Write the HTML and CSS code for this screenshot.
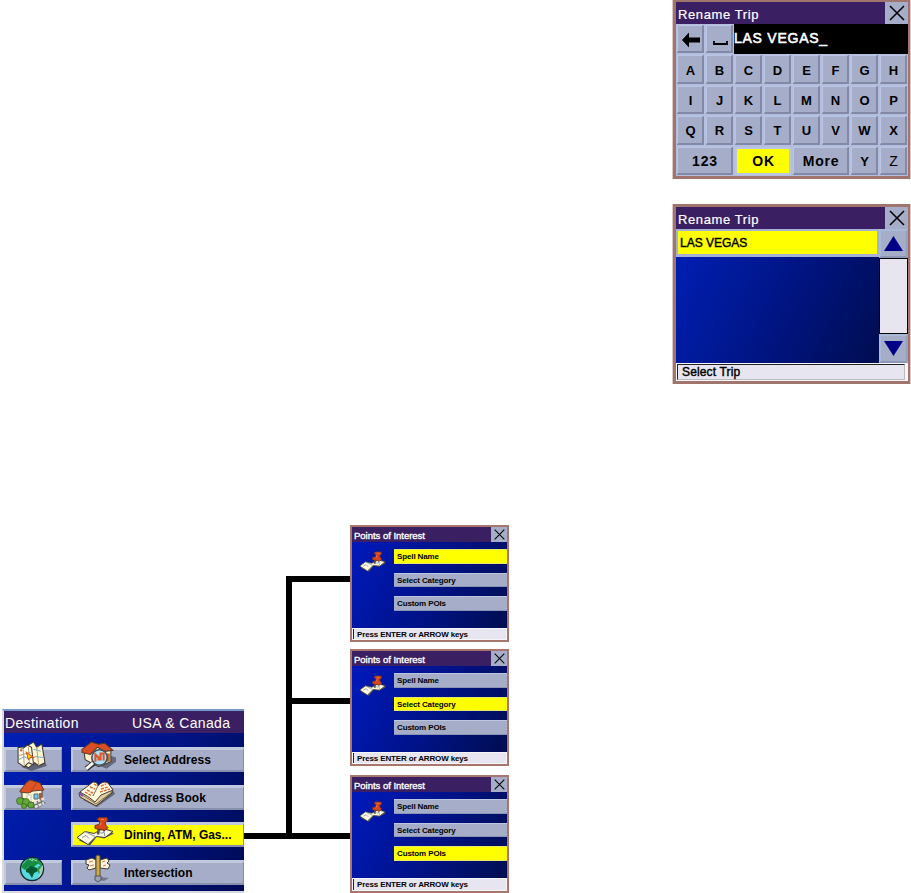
FILE: index.html
```html
<!DOCTYPE html>
<html lang="en">
<head>
    <meta charset="UTF-8">
    <title>Rename Trip / Points of Interest</title>
    <link rel="stylesheet" href="styles.css">
</head>
<body>
    <!-- shared icons -->
    <svg class="defs">
        <symbol id="close" viewBox="0 0 16 16">
            <path d="M1 1L15 15M15 1L1 15" fill="none" stroke="#000" stroke-width="1.5"/>
        </symbol>
        <symbol id="pin" viewBox="0 0 38 29">
            <path d="M2 23L13 15L18 18L27 13L37 16L27 21L20 19L13 28Z" fill="#555" transform="translate(1 1)"/>
            <path d="M1 21L9 15L18 17L27 12L37 15L29 21L20 20L12 28Z" fill="#fff9df" stroke="#413f35"/>
            <path d="M9 15L19 20M27 12L29 20M6 21L10 19L13 22M23 15L25 17L29 15" fill="none" stroke="#7996a8"/>
            <path d="M23 11L22 18" stroke="#555" stroke-width="2.5"/>
            <path d="M23 1L31 1L32 4L29 6L30 9L32 11L29 14L19 12L19 9L23 8L24 5L21 3Z" fill="#d94719" stroke="#6b301f"/>
            <path d="M25 3L28 3M25 6L24 9" stroke="#ff8051"/>
        </symbol>
    </svg>

    <div class="canvas">
        <div class="screen keyboard">
            <div class="titlebar"><span>Rename Trip</span><i class="close"><svg><use href="#close"/></svg></i></div>
            <div class="keys">
                <b class="key"><svg class="glyph" viewBox="0 0 20 16"><path d="M1 8L8 0.5V5.5H19V10.5H8V15.5Z"/></svg></b>
                <b class="key"><svg class="glyph" viewBox="0 0 20 16"><path d="M4 9V12H17V9" fill="none" stroke="#000" stroke-width="1.8"/></svg></b>
                <div class="entry">LAS VEGAS_</div>
                <b class="key">A</b><b class="key">B</b><b class="key">C</b><b class="key">D</b><b class="key">E</b><b class="key">F</b><b class="key">G</b><b class="key">H</b>
                <b class="key">I</b><b class="key">J</b><b class="key">K</b><b class="key">L</b><b class="key">M</b><b class="key">N</b><b class="key">O</b><b class="key">P</b>
                <b class="key">Q</b><b class="key">R</b><b class="key">S</b><b class="key">T</b><b class="key">U</b><b class="key">V</b><b class="key">W</b><b class="key">X</b>
                <b class="key wide">123</b><b class="key wide active">OK</b><b class="key wide">More</b><b class="key">Y</b><b class="key thin">Z</b>
            </div>
        </div>

        <div class="screen triplist">
            <div class="titlebar"><span>Rename Trip</span><i class="close"><svg><use href="#close"/></svg></i></div>
            <div class="list">
                <div class="rows"><div class="row">LAS VEGAS</div></div>
                <div class="scroll">
                    <div class="arrow"><svg viewBox="0 0 19 15"><path d="M9.5 0L19 15H0Z"/></svg></div>
                    <div class="track"></div>
                    <div class="arrow"><svg viewBox="0 0 19 15"><path d="M9.5 15L19 0H0Z"/></svg></div>
                </div>
            </div>
            <div class="status"><span>Select Trip</span></div>
        </div>

        <div class="line trunk"></div>
        <div class="line branch1"></div>
        <div class="line branch2"></div>
        <div class="line branch3"></div>

        <div class="screen poi poi1">
            <div class="titlebar"><span>Points of Interest</span><i class="close"><svg><use href="#close"/></svg></i></div>
            <div class="poi-body">
                <svg class="poi-icon"><use href="#pin"/></svg>
                <div class="options"><div class="active">Spell Name</div><div>Select Category</div><div>Custom POIs</div></div>
            </div>
            <div class="status"><span>Press ENTER or ARROW keys</span></div>
        </div>

        <div class="screen poi poi2">
            <div class="titlebar"><span>Points of Interest</span><i class="close"><svg><use href="#close"/></svg></i></div>
            <div class="poi-body">
                <svg class="poi-icon"><use href="#pin"/></svg>
                <div class="options"><div>Spell Name</div><div class="active">Select Category</div><div>Custom POIs</div></div>
            </div>
            <div class="status"><span>Press ENTER or ARROW keys</span></div>
        </div>

        <div class="screen poi poi3">
            <div class="titlebar"><span>Points of Interest</span><i class="close"><svg><use href="#close"/></svg></i></div>
            <div class="poi-body">
                <svg class="poi-icon"><use href="#pin"/></svg>
                <div class="options"><div>Spell Name</div><div>Select Category</div><div class="active">Custom POIs</div></div>
            </div>
            <div class="status"><span>Press ENTER or ARROW keys</span></div>
        </div>

        <div class="destination">
            <div class="dest-title"><span>Destination</span><span class="region">USA &amp; Canada</span></div>
            <div class="menu">
                <div class="cell">
                    <svg class="icon" viewBox="1 2 30 29">
                        <path d="M6 27L28 21L31 26L16 31Z" fill="#60647a"/>
                        <path d="M13 6L18 3L21 8L26 5L29 23L23 26L19 23L13 28L9 25Z" fill="#fff5d0" stroke="#3e3930"/>
                        <path d="M3 8L8 9L12 6L16 8L18 25L13 23L9 27L3 23Z" fill="#fffbe7" stroke="#3e3930"/>
                        <path d="M8 10L9 26M13 8L14 23M21 8L23 26M4 16L15 13" stroke="#baa878" fill="none"/>
                        <path d="M4 20L9 17L12 19M18 10L25 12M19 17L27 18" stroke="#7facc5" fill="none"/>
                        <path d="M11 13L18 18L15 18L13 20Z" fill="#ffe300" stroke="#d64b20"/>
                        <path d="M5 11H7" stroke="#d64b20" stroke-width="2"/>
                    </svg>
                </div>
                <div class="cell right">
                    <svg class="icon house" viewBox="1 0 34 30">
                        <path d="M8 20L26 27L35 20V16L17 10Z" fill="#666a7c"/>
                        <path d="M4 10L14 5L30 8V20L18 25L5 18Z" fill="#fff2c8" stroke="#403830"/>
                        <path d="M25 12H29V20H25Z" fill="#c16a36"/>
                        <path d="M2 8L11 1L18 3L24 2L32 9L24 10L17 6L10 13L2 11Z" fill="#dc4d24" stroke="#59382a"/>
                        <path d="M14 21L6 27" stroke="#292b2e" stroke-width="5"/>
                        <path d="M13 21L6 27" stroke="#f4f4e9" stroke-width="3"/>
                        <circle cx="19" cy="16" r="7.5" fill="#addef6" stroke="#40505d" stroke-width="1.5"/>
                        <path d="M15 20V13L18 16V19M20 19V12L23 12V19" fill="none" stroke="#df552a" stroke-width="2"/>
                    </svg>
                    <span>Select Address</span>
                </div>
                <div class="cell">
                    <svg class="icon" viewBox="1 1 31 30">
                        <path d="M5 22L20 18L31 25L22 31L8 28Z" fill="#777a77"/>
                        <path d="M7 11L14 6L27 9V22L18 25L7 20Z" fill="#fff4ce" stroke="#413c31"/>
                        <path d="M5 13L11 5L15 2L25 5L29 12L18 13L13 15L5 14Z" fill="#de5424" stroke="#62412a"/>
                        <path d="M15 15L22 4" stroke="#af4020"/>
                        <path d="M12 17H16V24L12 22Z" fill="#fff" stroke="#b9a984" stroke-width=".7"/>
                        <path d="M19 16H23V21H19Z" fill="#7ac8e6" stroke="#386d86"/>
                        <path d="M24 15H27V22L24 23Z" fill="#b75730"/>
                        <path d="M19 25L30 20M20 29L29 25" stroke="#e3e3df" stroke-width="2.5" stroke-dasharray="3 1"/>
                        <g fill="#64a837" stroke="#32621d" stroke-width=".7"><circle cx="5" cy="23" r="3.5"/><circle cx="11" cy="24" r="3.5"/><circle cx="16" cy="27" r="3"/><circle cx="9" cy="28" r="2.5"/></g>
                    </svg>
                </div>
                <div class="cell right">
                    <svg class="icon book" viewBox="0 0 37 29">
                        <path d="M5 21L19 28L37 15L35 11L28 12Z" fill="#62677a"/>
                        <path d="M1 14L5 12L16 19L21 17L34 9V14L18 27L2 18Z" fill="#e7cf9d" stroke="#453729"/>
                        <path d="M2 13L15 3Q20 3 20 7Q25 1 30 4L35 11L23 16L17 23Q10 17 2 13Z" fill="#fff9df" stroke="#493f32"/>
                        <path d="M20 7L15 17M3 15L18 25L34 13" fill="none" stroke="#786f58"/>
                        <path d="M1 14L5 17" stroke="#7550ae" stroke-width="2"/>
                        <path d="M12 8L17 10M9 11L15 14M7 13L14 17M16 5L19 7M23 7L28 5M23 10L30 8M22 13L32 10" stroke="#e06832" stroke-width="1.4" stroke-dasharray="3 1"/>
                    </svg>
                    <span>Address Book</span>
                </div>
                <div></div>
                <div class="cell right active">
                    <svg class="icon pin"><use href="#pin"/></svg>
                    <span class="dining">Dining, ATM, Gas...</span>
                </div>
                <div class="cell">
                    <svg class="icon globe" viewBox="0 0 26 26">
                        <circle cx="13" cy="13" r="11.5" fill="#58d8df" stroke="#102b2c" stroke-width="1.4"/>
                        <path d="M4 8L9 3L18 2L21 7L17 9L15 11L9 11L6 14L2 11Z" fill="#168b42"/>
                        <path d="M7 13L12 10L18 12L19 15L15 17L13 22L10 17L7 16Z" fill="#07592e"/>
                        <path d="M16 3L22 6L24 11L20 10L18 13L20 18L23 17L24 13" fill="#219747"/>
                        <path d="M24 9Q25 18 18 23Q22 17 20 14Z" fill="#c8d8cc" opacity=".8"/>
                        <path d="M10 3L14 5M13 3L18 5" stroke="#a2dfb5"/>
                    </svg>
                </div>
                <div class="cell right">
                    <svg class="icon post" viewBox="0 0 26 29">
                        <path d="M15 23L24 24L19 27L14 26Z" fill="#72778c"/>
                        <path d="M1 6L7 4L11 6V14L4 16L2 14L4 11L1 10Z" fill="#fff6db" stroke="#43392c"/>
                        <path d="M15 6L22 4L24 7L22 9L25 11L23 15L15 14Z" fill="#fff6db" stroke="#43392c"/>
                        <path d="M11 2L13 1L15 2V23H11Z" fill="#d2ad47" stroke="#594b2d"/>
                        <path d="M10 22H16V26L13 28L10 26Z" fill="#9fa3ad" stroke="#505362"/>
                        <path d="M4 8L8 7M5 12L9 11M17 8L20 7M18 12L21 11" stroke="#d67755"/>
                    </svg>
                    <span>Intersection</span>
                </div>
            </div>
        </div>
    </div>
</body>
</html>
```

FILE: styles.css
```css
body {
    margin: 0;
    background: #fff;
    color: #000;
    font-family: "Liberation Sans", Arial, sans-serif;
}
.defs {
    position: absolute;
    width: 0;
    height: 0;
}
.canvas {
    position: relative;
    width: 911px;
    height: 893px;
    overflow: hidden;
}
.screen {
    position: absolute;
    display: flex;
    flex-direction: column;
    box-sizing: border-box;
    border: solid #a0756d;
    white-space: nowrap;
}
.keyboard, .triplist {
    left: 673px;
    width: 237px;
    border-width: 2px 2px 3px 3px;
    box-shadow: -1px 0 #dcc9c5, 1px 0 #dcc9c5;
}
.keyboard {
    top: 0;
    height: 179px;
}
.triplist {
    top: 204px;
    height: 180px;
    border-top-width: 3px;
}
.titlebar {
    display: flex;
    justify-content: space-between;
    flex: none;
    height: 22px;
    line-height: 25px;
    background: #3a2062;
    color: #fff;
    font-size: 13px;
    letter-spacing: 0.6px;
    text-indent: 2px;
    -webkit-text-stroke: 0.2px #fff;
}
.close {
    display: flex;
    align-items: center;
    justify-content: center;
    width: 23px;
    background: #a5adc8;
}
.close svg {
    width: 16px;
    height: 16px;
}
.keys {
    display: grid;
    grid-template-columns: repeat(8, 1fr);
    grid-template-rows: repeat(5, 1fr);
    flex: 1;
    min-height: 0;
    background: #a5adc8;
}
.key {
    display: flex;
    align-items: center;
    justify-content: center;
    min-height: 0;
    box-sizing: border-box;
    padding: 2px 0 0 1px;
    border: solid;
    border-color: #bac5e5 #8289a7 #8289a7 #bac5e5;
    border-width: 2px 3px 3px 2px;
    background: #a5adc8;
    outline: 1px solid #b4bede;
    outline-offset: -1px;
    font-size: 13px;
    line-height: 15px;
}
.key.wide {
    grid-column: span 2;
    font-size: 14px;
    letter-spacing: 0.8px;
}
.key.thin {
    font-weight: normal;
    font-size: 14px;
}
.key.active {
    background: #ff0;
    border-color: #bac5e5;
    border-width: 3px;
}
.glyph {
    width: 20px;
    height: 16px;
}
.entry {
    grid-column: span 6;
    background: #000;
    color: #fff;
    font-size: 14px;
    -webkit-text-stroke: 0.55px #fff;
    line-height: 29px;
    letter-spacing: 0.75px;
}
.list {
    display: flex;
    height: 134px;
}
.rows {
    flex: 1;
    background: linear-gradient(115deg, #0020b8, #00137c 60%, #000d50);
}
.row {
    height: 28px;
    box-sizing: border-box;
    padding-left: 2px;
    border: solid #a5b1d4;
    border-width: 2px 2px 3px 2px;
    background: #ff0;
    font-size: 12px;
    -webkit-text-stroke: 0.4px #000;
    line-height: 24px;
}
.scroll {
    display: flex;
    flex-direction: column;
    width: 29px;
}
.arrow {
    display: flex;
    align-items: center;
    justify-content: center;
    height: 29px;
    box-sizing: border-box;
    border: 2px solid #a9b9da;
    border-right-color: #969fbb;
    border-bottom-color: #8d97b7;
    background: #a5adc8;
}
.arrow svg {
    width: 19px;
    height: 15px;
    fill: #000087;
}
.track {
    flex: 1;
    border: 1px solid #000;
    background: #e7e6f0;
}
.status {
    flex: 1;
    min-height: 0;
    box-sizing: border-box;
    padding: 1px 3px 1px 1px;
    background: #f5f5fa;
}
.status span {
    display: block;
    height: 100%;
    box-sizing: border-box;
    padding-left: 4px;
    border: 1px solid #222;
    border-right-color: #bbb;
    border-bottom-color: #bbb;
    background: #e7e6f0;
    font-size: 12px;
    -webkit-text-stroke: 0.4px #000;
    letter-spacing: 0.15px;
    line-height: 14px;
}
.line {
    position: absolute;
    background: #000;
}
.trunk {
    left: 286px;
    top: 576px;
    width: 6px;
    height: 262px;
}
.branch1, .branch2 {
    left: 286px;
    width: 65px;
    height: 6px;
}
.branch1 {
    top: 576px;
}
.branch2 {
    top: 698px;
}
.branch3 {
    left: 244px;
    top: 833px;
    width: 107px;
    height: 6px;
}
.poi {
    left: 350px;
    width: 159px;
    height: 117px;
    border-width: 2px;
    border-color: #a9766e;
}
.poi1 {
    top: 525px;
}
.poi2 {
    top: 649px;
}
.poi3 {
    top: 775px;
    height: 118px;
}
.poi .titlebar {
    height: 15px;
    font-size: 9.5px;
    line-height: 17px;
    letter-spacing: -0.02px;
    text-indent: 2px;
    -webkit-text-stroke: 0.35px #fff;
}
.poi .close {
    width: 16px;
}
.poi .close svg {
    width: 11px;
    height: 11px;
}
.poi-body {
    display: flex;
    height: 86px;
    background: linear-gradient(115deg, #0019bc, #001285 55%, #000d50);
}
.poi-icon {
    width: 27px;
    height: 23px;
    margin: 8px 8px 0 7px;
}
.options {
    display: flex;
    flex-direction: column;
    gap: 9px;
    flex: 1;
    padding-top: 7px;
}
.options div {
    height: 14.5px;
    box-sizing: border-box;
    padding-left: 3px;
    border: solid;
    border-width: 1px 0;
    border-color: #bdc7df #8993b3 #8993b3;
    background: #a5adc8;
    font-size: 8px;
    font-weight: bold;
    line-height: 13px;
    letter-spacing: -0.12px;
}
.options .active {
    background: #ff0;
    border-color: #e5e66a #aead51;
}
.poi .status {
    padding: 1px;
}
.poi .status span {
    padding-left: 3px;
    border-width: 0 0 0 1px;
    font-size: 8px;
    font-weight: bold;
    line-height: 11px;
    letter-spacing: -0.14px;
    -webkit-text-stroke: 0;
}
.destination {
    position: absolute;
    left: 2px;
    top: 709px;
    width: 242px;
    height: 184px;
    box-sizing: border-box;
    border: solid #d8d9df;
    border-width: 2px 0 2px 2px;
    border-top-color: #7797cb;
    background: linear-gradient(115deg, #0020b8, #001488 55%, #000b55);
    white-space: nowrap;
}
.dest-title {
    display: flex;
    height: 22px;
    background: #3a2062;
    color: #fff;
    font-size: 14px;
    line-height: 25px;
    letter-spacing: 0.35px;
}
.dest-title span {
    width: 126px;
    padding-left: 1px;
}
.dest-title .region {
    width: auto;
}
.menu {
    display: grid;
    grid-template-columns: 58px 173px;
    grid-auto-rows: 25px;
    column-gap: 9px;
    row-gap: 12.6px;
    padding-top: 14px;
}
.cell {
    display: flex;
    align-items: center;
    justify-content: center;
    box-sizing: border-box;
    border: solid;
    border-width: 3px 1px 2px 2px;
    border-color: #c1c9df #8790ac #8790ac #c1c9df;
    background: #a5adc8;
}
.cell.right {
    justify-content: flex-start;
    padding-left: 8px;
}
.cell.active {
    background: #ff0;
}
.icon {
    flex: none;
    width: 31px;
    height: 30px;
    margin: -11px 4px -3px 0;
}
.cell.right .house {
    width: 35px;
    height: 31px;
    margin-right: 8px;
}
.cell.right .book {
    width: 37px;
    height: 29px;
    margin-left: -3px;
    margin-right: 9px;
}
.cell.right .pin {
    width: 38px;
    height: 30px;
    margin-left: -5px;
    margin-right: 10px;
}
.cell .globe {
    width: 26px;
    height: 26px;
}
.cell.right .post {
    width: 26px;
    height: 29px;
    margin-left: 4px;
    margin-right: 13px;
}
.cell span {
    font-size: 12px;
    font-weight: bold;
    letter-spacing: 0.05px;
}
.cell .dining {
    letter-spacing: -0.03px;
}
```
